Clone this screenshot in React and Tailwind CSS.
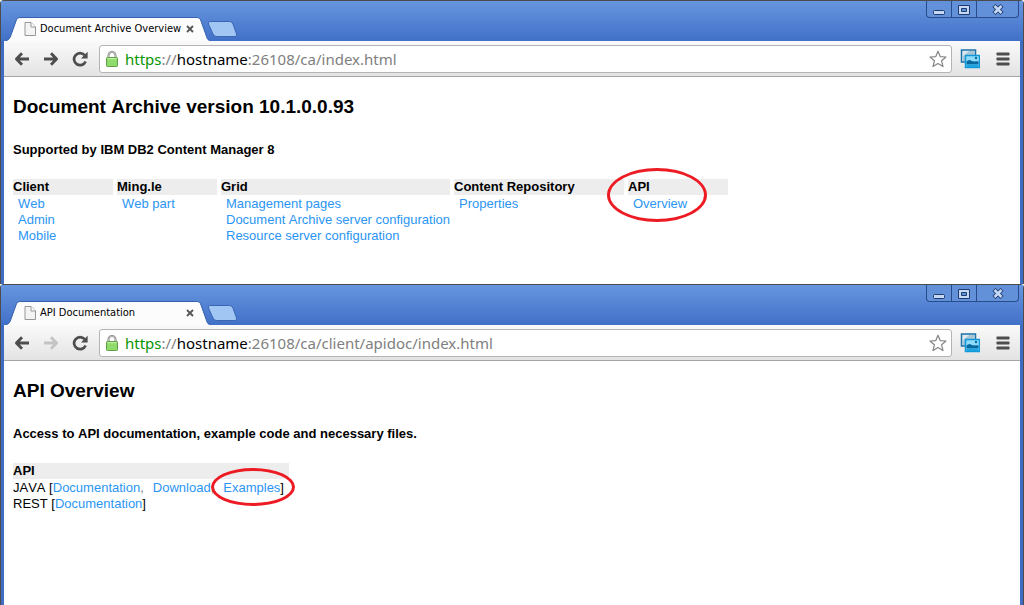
import React from "react";

const archiveColumns = [
    { title: "Client", width: "w-[100px]", links: ["Web", "Admin", "Mobile"] },
    { title: "Ming.le", width: "w-[100px]", links: ["Web part"] },
    {
        title: "Grid",
        width: "w-[229px]",
        links: ["Management pages", "Document Archive server configuration", "Resource server configuration"],
    },
    { title: "Content Repository", width: "w-[170px]", links: ["Properties"] },
    { title: "API", width: "w-[100px]", links: ["Overview"], circled: true },
];

const BackIcon = () => (
    <svg className="w-4 h-4" viewBox="0 0 16 16" fill="none" stroke="#4d4d4d" strokeWidth="2.8">
        <path d="M8 2.2 2.4 8 8 13.8M2.6 8H15" strokeLinejoin="round" />
    </svg>
);

const ForwardIcon = ({ disabled }) => (
    <svg className="w-4 h-4" viewBox="0 0 16 16" fill="none" stroke={disabled ? "#c4c4c4" : "#4d4d4d"} strokeWidth="2.8">
        <path d="M8 2.2 13.6 8 8 13.8M13.4 8H1" strokeLinejoin="round" />
    </svg>
);

const ReloadIcon = () => (
    <svg className="w-4 h-4" viewBox="0 0 16 16">
        <path d="M12.6 4.2A6 6 0 1 0 13.6 10.5" fill="none" stroke="#4d4d4d" strokeWidth="2.7" />
        <path d="M15.6 0.8V7.4H9z" fill="#4d4d4d" />
    </svg>
);

const LockIcon = () => (
    <svg className="w-3 h-4 shrink-0" viewBox="0 0 12 16">
        <path d="M2.5 8V4.5a3.5 3.5 0 0 1 7 0V8" fill="none" stroke="#858585" strokeWidth="2" />
        <path d="M2.5 8V4.5a3.5 3.5 0 0 1 7 0V8" fill="none" stroke="#d8d8d8" strokeWidth="0.7" />
        <rect x="0.5" y="6.5" width="11" height="9" rx="0.8" fill="#8fdc6c" stroke="#5f9e42" />
        <path d="M1.5 7.6h9" stroke="#c9f3b3" />
    </svg>
);

const StarIcon = () => (
    <svg className="w-[18px] h-[18px]" viewBox="0 0 18 18">
        <path
            d="M9 1.2 11.2 6.6 17 7 12.6 10.8 14 16.6 9 13.5 4 16.6 5.4 10.8 1 7 6.8 6.6z"
            fill="#fff"
            stroke="#858585"
            strokeWidth="1.2"
            strokeLinejoin="round"
        />
    </svg>
);

const PicturesIcon = () => (
    <svg className="w-5 h-5" viewBox="0 0 20 20">
        <rect x="1.5" y="1" width="14" height="12" fill="#dde8ee" stroke="#1a72a8" strokeWidth="1.5" />
        <path d="M2.5 12V8L9 2h6v4H5v6z" fill="#a9c6d6" />
        <rect x="5.5" y="6.5" width="14" height="12" fill="#8fdcfa" stroke="#1198d8" strokeWidth="1.5" />
        <path d="M6.500 12.500C8 11 9.500 10.500 11 11.500C13 13 16 12 18.500 12.500V15.500H6.500z" fill="#0869a0" />
        <path d="M6.500 15.500h12V18h-12z" fill="#1fa3e0" />
        <circle cx="16" cy="9" r="1.2" fill="#0869a0" />
    </svg>
);

const MenuIcon = () => (
    <svg className="w-[14px] h-[14px]" viewBox="0 0 14 14" fill="#4d4d4d">
        <rect x="0.5" y="0.5" width="13" height="3" rx="0.8" />
        <rect x="0.5" y="5.5" width="13" height="3" rx="0.8" />
        <rect x="0.5" y="10.5" width="13" height="3" rx="0.8" />
    </svg>
);

const PageIcon = () => (
    <svg className="w-3 h-[14px] shrink-0" viewBox="0 0 12 14">
        <path d="M1 .5h6L11.5 5v8.5H1z" fill="#f4f4f4" stroke="#979797" />
        <path d="M7 .5V5h4.5" fill="#fff" stroke="#979797" />
    </svg>
);

const WindowControls = () => (
    <div className="flex h-[17px] rounded-b border border-t-0 border-[#284b8c] divide-x divide-[#284b8c] bg-[#6291da]">
        <button type="button" aria-label="Minimize" className="w-[25px] flex justify-center items-center">
            <svg className="w-3 h-4" viewBox="0 0 12 16">
                <rect x="0.5" y="9.5" width="11" height="4" rx="1" fill="#c5d9f5" stroke="#1f3a6e" />
            </svg>
        </button>
        <button type="button" aria-label="Maximize" className="w-[25px] flex justify-center items-center">
            <svg className="w-3 h-4" viewBox="0 0 12 16">
                <path
                    d="M.5 4.5h11v9H.5zM3.5 7.5v3h5v-3z"
                    fill="#c5d9f5"
                    fillRule="evenodd"
                    stroke="#1f3a6e"
                />
            </svg>
        </button>
        <button type="button" aria-label="Close window" className="w-[41px] flex justify-center items-center">
            <svg className="w-3 h-4" viewBox="0 0 12 16">
                <path d="M2 4.5l8 8M10 4.5l-8 8" stroke="#1f3a6e" strokeWidth="4.4" />
                <path d="M2.500 5l7 7M9.500 5l-7 7" stroke="#c5d9f5" strokeWidth="2.6" />
            </svg>
        </button>
    </div>
);

const Tab = ({ title }) => (
    <div className="relative w-[204px] h-6">
        <svg className="absolute inset-0 w-full h-full" viewBox="0 0 204 24">
            <path
                d="M0 24C3 23 4 21 5 18L10 4C11 1 12 .5 15 .5H190C193 .5 194 1 195 4L200 18C201 22 202 23 204 24z"
                fill="#fcfcfc"
            />
            <path
                d="M0 23.5C3 23 4 21 5 18L10 4C11 1 12 .5 15 .5H190C193 .5 194 1 195 4L200 18C201 22 202 23 204 23.5"
                fill="none"
                stroke="#3560ac"
            />
        </svg>
        <div className="relative flex items-center h-full pl-[18px] pr-4">
            <PageIcon />
            <span className="ml-1 grow whitespace-nowrap text-[11px] font-['DejaVu_Sans_Condensed','Noto_Sans',sans-serif] text-black">
                {title}
            </span>
            <button type="button" aria-label="Close tab">
                <svg className="w-2 h-2" viewBox="0 0 8 8">
                    <path d="M1 1l6 6M7 1L1 7" stroke="#555" strokeWidth="1.8" />
                </svg>
            </button>
        </div>
    </div>
);

const AddressBar = ({ path }) => (
    <div className="grow flex items-center h-7 ml-[11px] pl-1.5 pr-1 bg-white border border-[#b4b4b4] rounded-[3px]">
        <LockIcon />
        <div
            role="textbox"
            aria-label="Address"
            contentEditable
            suppressContentEditableWarning
            spellCheck={false}
            className="grow ml-[7px] whitespace-nowrap outline-none text-[15px] leading-6 font-['Noto_Sans',sans-serif] text-[#808080]"
        >
            <span className="text-[#079500]">https</span>://<span className="text-black">hostname</span>
            {path}
        </div>
        <button type="button" aria-label="Bookmark this page">
            <StarIcon />
        </button>
    </div>
);

const BrowserWindow = ({ title, path, canGoForward, className, children }) => (
    <section
        className={`flex flex-col border-t border-x border-[#4c4c4c] bg-[#4170c8] ${className}`}
    >
        <div className="flex justify-between h-10 bg-linear-to-b from-[#6796df] to-[#4170c8]">
            <div className="flex items-end pl-[5px]">
                <Tab title={title} />
                <button type="button" aria-label="New tab" className="-ml-1 mb-1">
                    <svg className="w-8 h-4" viewBox="0 0 32 16">
                        <path
                            d="M4 .5H23.5Q26 .5 27 3L30.5 13Q31.5 15.5 29 15.5H10.5Q8 15.5 7 13L2.5 3Q1.5 .5 4 .5z"
                            fill="#a2c6f4"
                            stroke="#3a66b4"
                        />
                    </svg>
                </button>
            </div>
            <div className="pr-1">
                <WindowControls />
            </div>
        </div>

        <div className="grow flex flex-col border-x-3 border-[#3e6cc0]">
            <div className="flex items-center h-9 px-2.5 border-b border-[#a5a5a5] bg-linear-to-b from-[#fafafa] to-[#e3e3e3]">
                <div className="flex gap-[13px]">
                    <button type="button" aria-label="Back">
                        <BackIcon />
                    </button>
                    <button type="button" aria-label="Forward" disabled={!canGoForward}>
                        <ForwardIcon disabled={!canGoForward} />
                    </button>
                    <button type="button" aria-label="Reload">
                        <ReloadIcon />
                    </button>
                </div>
                <AddressBar path={path} />
                <button type="button" aria-label="Screenshots" className="ml-2">
                    <PicturesIcon />
                </button>
                <button type="button" aria-label="Menu" className="ml-4">
                    <MenuIcon />
                </button>
            </div>

            <main className="grow bg-white pl-[9px] pt-[18px] text-[13px] leading-4 font-['Liberation_Sans',Arial,sans-serif] [font-kerning:none] text-black">
                {children}
            </main>
        </div>
    </section>
);

const PageLink = ({ children }) => (
    <a href="#" className="text-[#2b95f3] hover:underline">
        {children}
    </a>
);

const Circled = ({ ring, children }) => (
    <span className="relative">
        {children}
        <span className={`absolute rounded-[50%] border-3 border-[#ed1c24] pointer-events-none ${ring}`} />
    </span>
);

const App = () => {
    return (
        <div className="min-h-screen flex flex-col bg-white">
            {/* Archive start page */}
            <BrowserWindow
                title="Document Archive Overview"
                path=":26108/ca/index.html"
                canGoForward
                className="rounded-t"
            >
                <h1 className="text-[19px] leading-6 font-bold">Document Archive version 10.1.0.0.93</h1>
                <h2 className="mt-[23px] font-bold">Supported by IBM DB2 Content Manager 8</h2>

                <table className="mt-[21px] mb-10 -ml-1 border-separate border-spacing-x-1 border-spacing-y-0">
                    <thead>
                        <tr>
                            {archiveColumns.map((column) => (
                                <th key={column.title} className={`${column.width} p-0 bg-[#ededed] text-left font-bold`}>
                                    {column.title}
                                </th>
                            ))}
                        </tr>
                    </thead>
                    <tbody>
                        <tr>
                            {archiveColumns.map((column) => (
                                <td key={column.title} className="p-0 pt-px pl-[5px] align-top">
                                    <ul>
                                        {column.links.map((link) => (
                                            <li key={link}>
                                                {column.circled ? (
                                                    <Circled ring="-left-[26px] -top-[28px] w-[100px] h-[54px]">
                                                        <PageLink>{link}</PageLink>
                                                    </Circled>
                                                ) : (
                                                    <PageLink>{link}</PageLink>
                                                )}
                                            </li>
                                        ))}
                                    </ul>
                                </td>
                            ))}
                        </tr>
                    </tbody>
                </table>
            </BrowserWindow>

            {/* API documentation */}
            <BrowserWindow
                title="API Documentation"
                path=":26108/ca/client/apidoc/index.html"
                className="grow rounded-t"
            >
                <h1 className="text-[19px] leading-6 font-bold">API Overview</h1>
                <h2 className="mt-[23px] font-bold">
                    Access to API documentation, example code and necessary files.
                </h2>

                <table className="mt-[21px] w-[276px]">
                    <thead>
                        <tr>
                            <th className="p-0 bg-[#ededed] text-left font-bold">API</th>
                        </tr>
                    </thead>
                    <tbody>
                        <tr>
                            <td className="p-0 pt-px whitespace-nowrap">
                                JAVA [<PageLink>Documentation</PageLink>
                                <span className="mr-[9px] text-[#808080]">,</span>
                                <PageLink>Download</PageLink>
                                <span className="mr-[9px] text-[#808080]">,</span>
                                <Circled ring="-left-3 -top-[12px] w-[84px] h-[38px]">
                                    <PageLink>Examples</PageLink>
                                </Circled>
                                ]
                            </td>
                        </tr>
                        <tr>
                            <td className="p-0">
                                REST [<PageLink>Documentation</PageLink>]
                            </td>
                        </tr>
                    </tbody>
                </table>
            </BrowserWindow>
        </div>
    );
};

export default App;
